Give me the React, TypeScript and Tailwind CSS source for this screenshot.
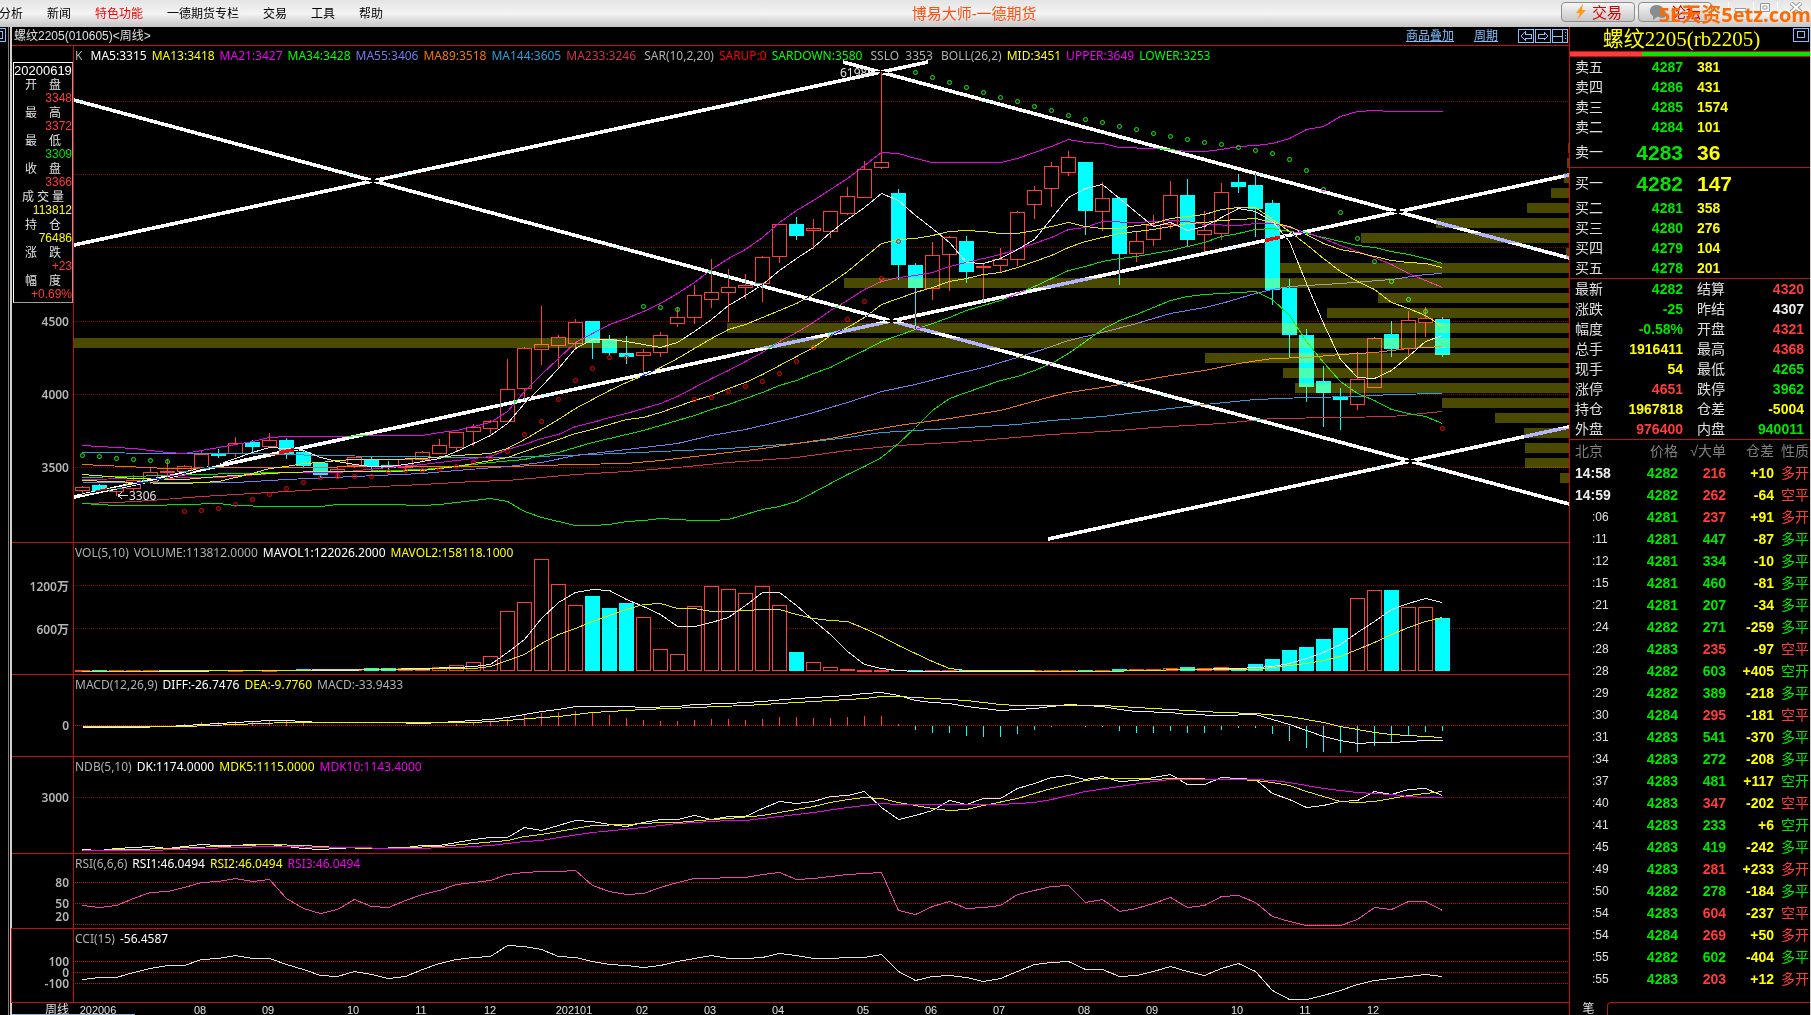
import React from "react";

type Kind = "r" | "c";
type Segment = [text: string, color: string];

const RED = "text-[#ff3c3c]";
const GREEN = "text-[#00e600]";
const YELLOW = "text-[#ffff00]";
const WHITE = "text-[#ececec]";
const GRAY = "text-[#b0b0b0]";
const MAGENTA = "text-[#f000f0]";

const barX = (i: number) => 82 + 17 * i;

// "index:y index:y ..." -> polyline points
const toPoints = (data: string) =>
  data
    .split(" ")
    .map((pair) => {
      const [i, y] = pair.split(":").map(Number);
      return `${barX(i) + 0.5},${y + 0.5}`;
    })
    .join(" ");

// kind, high, top, bottom, low
const CANDLES = `r486,487,490,494 c484,485,490,491 r487,488,491,495 r475,480,488,490 r467,472,481,483 r459,471,472,477
r465,466,471,475 r451,454,467,467 c449,453,455,457 r437,443,453,456 c440,442,446,453 r433,440,446,447
c438,440,453,458 c450,452,465,466 c462,463,474,477 r467,469,471,477 r457,457,465,467 c456,459,466,469
c461,465,467,470 r459,459,467,468 r451,452,459,460 r439,445,453,453 r432,432,447,450 r424,427,431,445
r420,421,428,433 r359,389,421,421 r347,348,388,399 r306,344,349,364 r335,337,345,368 r319,322,343,349
c321,321,342,358 c335,339,352,355 c336,353,356,363 r349,352,355,373 r332,335,352,356 r307,317,323,326
r285,295,317,323 r259,292,299,307 r269,287,292,321 r274,285,287,298 r256,257,283,301 r224,224,256,262
c217,224,235,239 r219,228,230,248 r211,211,231,237 r187,196,213,214 r161,169,197,197 r72,162,167,168
c189,193,264,279 c263,265,287,328 r242,255,288,299 r236,237,254,290 c236,241,271,282 r263,266,267,301
r248,259,265,272 r211,212,259,265 r186,190,204,218 r162,166,188,206 r151,157,172,175 c162,162,210,234
r182,198,211,230 c197,198,253,284 r231,241,253,261 r215,225,239,245 r181,195,224,228 c179,195,239,246
r211,230,234,251 r183,192,233,239 c174,182,186,192 c173,185,208,236 c200,203,289,304 c279,288,334,357
c329,335,386,401 c366,381,392,426 c388,397,399,429 r352,379,404,409 r337,338,387,387 c321,334,348,356
r311,320,348,354 r307,318,322,336 c317,319,354,356`
  .split(/\s+/)
  .map((s) => {
    const [high, top, bottom, low] = s.slice(1).split(",").map(Number);
    return { kind: s[0] as Kind, high, top, bottom, low };
  });

const MAIN_LINES: [color: string, data: string][] = [
  ["#d03050", "0:503 2:502 4:500 7:496 11:492 15:488 20:484 23:481 25:480 27:477 29:474 32:471 35:467 38:462 42:457 45:450 48:445 52:441 57:434 61:430 63:427 67:423 70:418 74:417 77:416 80:411"],
  ["#2a9fd8", "0:452 5:453 10:453 14:455 18:456 23:457 25:457 30:454 34:451 38:448 42:443 45:437 47:432 50:429 53:426 55:424 57:420 60:416 63:410 66:404 69:399 72:397 75:396 77:394 80:393"],
  ["#f07800", "0:464 5:468 10:467 20:466 25:466 29:464 32:463 34:460 36:456 38:452 40:448 42:443 44:438 46:431 48:425 51:418 54:410 57:396 58:392 60:387 62:381 64:375 66:370 68:363 70:358 72:357 74:354 76:352 78:348 80:346"],
  ["#7878f0", "0:482 9:482 12:479 16:476 20:473 22:470 25:466 27:462 29:455 31:451 33:447 35:443 37:435 39:429 41:421 43:412 45:402 47:391 49:384 51:375 53:367 55:357 57:346 58:340 60:332 62:323 64:313 66:307 67:303 68:298 69:293 70:289 71:286 74:283 77:279 79:274 80:273"],
  ["#00e600", "0:477 5:475 9:473 12:472 16:471 20:469 22:466 24:462 26:459 27:455 28:452 29:447 30:442 31:438 32:434 33:430 34:425 35:420 36:415 37:409 38:404 39:398 40:392 41:385 42:380 43:373 44:367 45:358 46:350 47:341 48:335 49:329 50:323 51:317 52:310 53:305 54:300 55:293 56:286 57:278 58:270 59:266 60:261 61:258 62:256 63:253 64:250 65:246 66:242 67:236 68:233 69:229 70:228 71:231 72:233 73:237 74:241 75:245 76:247 77:251 78:254 79:258 80:263"],
  ["#e000e0", "0:479 3:478 8:477 12:472 15:472 18:467 20:464 22:460 24:456 25:449 26:444 27:438 28:434 29:426 30:422 31:417 32:413 33:408 34:403 35:396 36:387 37:378 38:370 39:361 40:352 41:341 42:332 43:322 44:310 45:300 46:289 47:281 48:277 49:275 50:272 51:266 52:262 53:258 54:254 55:249 56:243 57:237 58:229 59:227 60:221 62:222 63:221 64:220 65:221 66:224 68:225 69:223 70:223 71:227 72:232 73:238 74:245 75:251 76:257 77:264 78:273 79:280 80:287"],
  ["#e6e600", "0:474 3:478 6:479 8:476 10:474 12:472 14:471 18:471 20:470 21:468 22:466 23:463 24:460 25:457 26:451 27:445 28:439 29:433 30:429 31:424 32:419 33:417 34:412 35:406 36:400 37:395 38:388 39:382 40:374 41:365 42:356 43:347 44:335 45:327 46:317 47:304 48:298 49:292 50:287 51:281 52:278 53:274 54:272 55:267 56:261 57:255 58:247 59:241 60:237 61:233 62:231 63:229 64:226 65:223 66:222 67:220 69:218 70:222 71:226 72:234 73:243 74:249 75:252 76:256 77:260 78:262 79:263 80:267"],
  ["#e6e600", "0:480 5:483 6:483 7:482 8:481 9:477 10:473 11:468 12:466 13:463 14:462 15:460 16:459 18:459 20:458 22:455 24:453 25:448 26:439 27:429 28:419 29:408 30:399 31:390 32:382 33:375 34:367 35:358 36:348 37:338 38:329 39:324 40:317 41:310 42:303 43:294 44:283 45:271 46:257 47:243 48:239 49:238 50:235 51:231 52:230 53:231 54:233 55:233 56:230 57:226 58:222 59:226 60:228 61:228 62:225 63:223 64:218 65:216 66:214 67:209 68:207 69:207 70:219 71:231 72:244 73:258 74:271 75:281 76:289 77:302 78:308 79:315 80:326"],
  ["#f000f0", "0:445 3:448 5:452 6:453 8:447 10:441 11:437 12:436 20:435 21:432 22:430 24:422 25:411 26:391 27:374 28:358 29:342 30:333 31:324 32:318 33:311 34:303 35:293 36:282 37:269 38:258 39:249 40:237 41:222 42:210 43:200 44:189 45:178 46:165 47:152 48:153 49:158 50:162 54:162 55:158 56:152 57:146 58:139 59:142 60:143 61:147 63:148 64:149 65:151 66:151 67:149 68:146 69:145 70:143 71:138 72:129 73:126 74:116 75:111 76:110 77:111 80:111"],
  ["#00e600", "0:503 2:505 4:505 6:504 8:503 9:505 11:506 14:506 15:504 18:504 20:505 21:504 22:502 23:500 24:498 25:501 26:511 27:517 28:521 29:525 30:525 31:524 32:521 33:520 34:518 36:520 37:520 38:519 39:514 40:509 41:506 42:501 43:492 44:483 45:474 46:466 47:457 48:443 49:427 50:410 51:398 52:392 53:386 54:380 55:376 56:370 57:363 58:353 59:341 60:329 61:320 62:314 63:307 64:300 65:296 66:294 67:293 69:291 70:299 71:315 72:341 73:362 74:381 75:393 76:400 77:409 78:413 79:416 80:423"],
  ["#e8e8e8", "0:494 4:481 6:473 7:468 8:464 9:458 10:452 11:447 12:448 13:450 14:457 15:461 16:464 17:466 18:466 19:464 20:461 21:458 22:451 23:443 24:435 25:423 26:403 27:386 28:368 29:348 30:339 31:339 32:341 33:344 34:347 35:342 36:331 37:319 38:305 39:295 40:284 41:270 42:258 43:247 44:232 45:219 46:207 47:193 48:200 49:215 50:228 51:242 52:262 53:263 54:258 55:249 56:239 57:218 58:197 59:188 60:184 61:198 62:212 63:226 64:222 65:230 66:226 67:217 68:208 69:211 70:221 71:241 72:283 73:323 74:359 75:377 76:378 77:370 78:356 79:341 80:335"],
];

const SAR_DOWN =
  "0:455 1:456 2:458 3:459 4:460 5:461 33:306 34:307 35:309 49:72 50:77 51:82 52:87 53:92 54:97 55:101 56:106 57:110 58:115 59:119 60:122 61:126 62:129 63:133 64:136 65:139 66:142 67:144 68:147 69:150 70:153 71:159 72:170 73:189 74:212 75:238 76:261 77:281 78:299 79:311";
const SAR_UP =
  "6:511 7:510 8:508 9:504 10:499 11:494 12:488 13:482 14:477 15:476 16:476 17:476 18:471 19:470 20:470 21:469 22:466 23:462 24:457 25:451 26:434 27:421 28:399 29:380 30:368 31:357 32:357 36:399 37:397 38:391 39:386 40:381 41:373 42:361 43:347 44:334 45:319 46:301 47:278 48:241 80:428";

const TREND_LINES = [
  [74, 100, 1569, 504],
  [74, 245, 928, 62],
  [843, 62, 1569, 258],
  [74, 497, 1569, 175],
  [1048, 539, 1569, 427],
];

// left edge of each price-volume row, 15px apart starting at y=143
const PROFILE = [1568, 1567, 1564, 1551, 1527, 1436, 1361, 1566, 1280, 844, 1378, 1327, 727, 74, 1205, 1283, 1295, 1442, 1495, 1524, 1525, 1525, 1560];

const VOLUME_TOPS: Record<number, number> = {
  13: 669, 14: 669, 15: 669, 16: 669, 17: 668, 18: 668, 19: 668, 20: 668, 21: 667, 22: 665, 23: 662, 24: 656,
  25: 611, 26: 602, 27: 559, 28: 584, 29: 605, 30: 596, 31: 608, 32: 603, 33: 617, 34: 649, 35: 654, 36: 606,
  37: 586, 38: 589, 39: 593, 40: 586, 41: 605, 42: 652, 43: 662, 44: 667, 45: 669, 61: 669, 62: 669, 63: 669,
  64: 668, 65: 667, 66: 668, 67: 667, 68: 669, 69: 664, 70: 659, 71: 650, 72: 647, 73: 639, 74: 628, 75: 598,
  76: 590, 77: 590, 78: 607, 79: 607, 80: 618,
};

const MACD_BARS =
  "6:724 7:722 8:722 9:721 10:721 11:720 12:721 13:722 22:724 23:722 24:721 25:719 26:715 27:713 28:712 29:711 30:713 31:715 32:718 33:720 34:721 35:721 36:720 37:719 38:719 39:720 40:719 41:717 42:717 43:718 44:718 45:717 46:716 47:716 48:724 49:730 50:733 51:733 52:736 53:737 54:737 55:734 56:730 57:727 59:727 60:727 61:731 62:733 63:733 64:731 65:733 66:733 67:730 68:728 69:728 70:734 71:741 72:748 73:752 74:753 75:752 76:746 77:742 78:735 79:732 80:731";

const RSI_LINE =
  "0:905 1:907 2:905 3:898 4:892 5:891 6:887 7:882 8:881 9:878 10:881 11:879 12:898 13:908 14:913 15:909 16:899 17:906 18:907 19:900 20:894 21:890 22:884 23:882 24:880 25:874 26:872 27:871 28:871 29:870 30:885 31:891 32:894 33:893 34:887 35:882 36:878 37:878 38:877 39:877 40:874 41:872 42:879 43:878 44:876 45:874 46:873 47:872 48:910 49:914 50:906 51:901 52:908 53:907 54:905 55:894 56:890 57:886 58:885 59:902 60:899 61:911 62:908 63:903 64:897 65:907 66:905 67:896 68:895 69:902 70:916 71:921 72:925 74:925 75:919 76:907 77:909 78:901 79:901 80:910";

const SUB_LINES = {
  vol: [
    ["#e8e8e8", "0:671 15:670 20:668 22:667 23:666 24:664 25:652 26:639 27:618 28:602 29:592 30:589 31:590 32:599 33:606 34:614 35:626 36:626 37:622 38:617 39:605 40:592 41:592 42:605 43:620 44:634 45:651 46:664 47:668 48:670 49:671 60:671 65:669 68:668 70:666 71:663 72:658 73:652 74:644 75:632 76:621 77:609 78:603 79:598 80:602"],
    ["#e6e600", "0:671 18:669 23:668 24:666 25:660 26:654 27:643 28:634 29:628 30:621 31:615 32:609 33:604 34:603 35:608 36:608 37:611 38:611 39:610 40:609 41:609 42:614 43:618 44:620 45:621 46:628 47:636 48:645 49:653 50:661 51:668 52:670 60:671 65:669 69:669 70:667 71:665 72:663 73:660 74:656 75:649 76:642 77:634 78:627 79:621 80:617"],
  ],
  macd: [
    ["#ececec", "0:727 3:727 5:726 7:724 9:722 11:720 12:720 14:722 18:722 20:723 22:721 24:719 25:717 26:714 27:711 28:709 29:706 32:706 33:707 35:706 36:704 38:703 40:701 42:698 44:696 45:695 46:693 47:692 48:695 49:700 50:702 51:703 52:706 53:708 54:710 55:709 56:708 57:706 58:704 60:706 61:709 62:711 64:712 65:714 67:715 69:714 70:719 71:724 72:730 73:736 74:740 75:743 76:742 77:742 78:741 79:740 80:740"],
    ["#f0f000", "0:726 6:726 9:724 12:722 23:722 25:720 27:717 28:716 29:714 30:712 33:709 36:707 39:705 42:702 44:700 46:698 47:696 48:696 50:698 52:700 54:704 55:705 60:705 62:707 64:709 66:711 67:712 69:713 71:716 72:719 73:722 74:726 75:729 76:732 77:734 79:736 80:737"],
  ],
  ndb: [
    ["#e8e8e8", "0:849 1:850 2:848 4:846 5:848 7:844 8:845 11:844 12:846 13:848 14:849 16:847 18:848 19:847 20:845 21:845 22:842 23:839 24:837 25:837 26:827 27:830 28:825 29:820 30:821 31:824 32:826 33:822 34:819 35:819 36:815 37:819 38:816 39:816 40:808 41:801 42:803 43:801 44:796 45:795 46:791 47:807 48:819 49:815 50:810 51:800 52:804 53:798 54:798 55:788 56:783 57:777 58:775 59:779 60:776 61:781 62:780 63:777 64:774 65:784 66:784 67:777 68:778 69:779 70:793 71:799 72:807 73:805 74:801 75:800 76:791 77:794 78:789 79:788 80:795"],
    ["#e6e600", "0:850 3:849 5:848 8:846 11:844 13:845 15:847 17:848 19:847 21:846 23:843 25:840 26:836 27:834 28:831 29:828 30:825 32:824 34:822 35:822 37:819 38:818 40:815 41:812 43:806 44:802 45:799 46:797 47:798 48:802 50:808 51:810 52:809 53:805 55:798 57:788 58:784 59:780 60:778 62:778 63:779 64:778 68:779 69:780 70:782 71:785 72:791 73:796 74:801 75:802 76:801 77:798 78:795 79:793 80:791"],
    ["#f000f0", "0:850 4:850 7:848 9:847 11:846 15:847 19:848 22:847 24:845 25:843 26:841 27:840 28:837 30:832 33:827 35:823 38:820 39:820 41:816 43:812 45:807 47:803 48:804 54:804 56:802 57:799 59:791 61:786 63:781 64:779 69:779 70:780 71:782 73:788 75:792 77:794 78:796 79:797 80:797"],
  ],
  rsi: [
    ["#f040b0", RSI_LINE],
  ],
  cci: [
    ["#e0e0e0", "0:979 1:977 2:977 3:972 4:968 5:965 6:965 7:959 8:958 9:955 10:958 11:958 12:964 13:969 14:975 15:976 16:971 17:974 18:978 19:976 20:969 21:963 22:959 23:957 24:956 25:945 26:946 27:949 28:956 29:957 30:961 31:964 32:965 33:967 34:965 35:961 36:958 37:955 38:958 39:958 40:957 41:953 42:955 43:958 44:958 45:957 46:957 47:954 48:971 49:980 50:976 51:975 52:977 53:981 54:978 55:971 56:964 57:962 58:961 59:969 60:969 61:976 62:975 63:971 64:966 65:971 66:975 67:968 68:963 69:971 70:990 71:999 72:999 73:995 74:990 75:984 76:980 77:978 78:976 79:974 80:976"],
  ],
} as Record<string, [string, string][]>;

const MONTHS: [x: number, label: string][] = [
  [98, "202006"], [200, "08"], [268, "09"], [353, "10"], [421, "11"], [490, "12"], [574, "202101"], [642, "02"], [710, "03"],
  [778, "04"], [863, "05"], [931, "06"], [999, "07"], [1084, "08"], [1152, "09"], [1237, "10"], [1305, "11"], [1373, "12"],
];

const INFO: [label: string, value: string, color: string][] = [
  ["开盘", "3348", RED],
  ["最高", "3372", RED],
  ["最低", "3309", GREEN],
  ["收盘", "3366", RED],
  ["成交量", "113812", YELLOW],
  ["持仓", "76486", YELLOW],
  ["涨跌", "+23", RED],
  ["幅度", "+0.69%", RED],
];

const ASKS = [["卖五", "4287", "381"], ["卖四", "4286", "431"], ["卖三", "4285", "1574"], ["卖二", "4284", "101"], ["卖一", "4283", "36"]];
const BIDS = [["买一", "4282", "147"], ["买二", "4281", "358"], ["买三", "4280", "276"], ["买四", "4279", "104"], ["买五", "4278", "201"]];

const STATS: [string, string, string, string, string, string][] = [
  ["最新", "4282", GREEN, "结算", "4320", RED],
  ["涨跌", "-25", GREEN, "昨结", "4307", WHITE],
  ["幅度", "-0.58%", GREEN, "开盘", "4321", RED],
  ["总手", "1916411", YELLOW, "最高", "4368", RED],
  ["现手", "54", YELLOW, "最低", "4265", GREEN],
  ["涨停", "4651", RED, "跌停", "3962", GREEN],
  ["持仓", "1967818", YELLOW, "仓差", "-5004", YELLOW],
  ["外盘", "976400", RED, "内盘", "940011", GREEN],
];

// time, price, volume, open interest change, nature, kind (r = buy side, g = sell side)
const TICKS = `14:58 4282 216 +10 多开 r
14:59 4282 262 -64 空平 r
:06 4281 237 +91 多开 r
:11 4281 447 -87 多平 g
:12 4281 334 -10 多平 g
:15 4281 460 -81 多平 g
:21 4281 207 -34 多平 g
:24 4282 271 -259 多平 g
:28 4283 235 -97 空平 r
:28 4282 603 +405 空开 g
:29 4282 389 -218 多平 g
:30 4284 295 -181 空平 r
:31 4283 541 -370 多平 g
:34 4283 272 -208 多平 g
:37 4283 481 +117 空开 g
:40 4283 347 -202 空平 r
:41 4283 233 +6 空开 g
:45 4283 419 -242 多平 g
:49 4283 281 +233 多开 r
:50 4282 278 -184 多平 g
:54 4283 604 -237 空平 r
:54 4284 269 +50 多开 r
:55 4282 602 -404 多平 g
:55 4283 203 +12 多开 r`
  .split("\n")
  .map((row) => row.split(" "));

const Lines: React.FC<{ items: [string, string][] }> = ({ items }) => (
  <>
    {items.map(([color, data], n) => (
      <polyline key={n} points={toPoints(data)} fill="none" stroke={color} />
    ))}
  </>
);

const Grid: React.FC<{ rows: number[]; color?: string }> = ({ rows, color = "#8c0000" }) => (
  <>
    {rows.map((y) => (
      <line key={y} x1={75} x2={1569} y1={y + 0.5} y2={y + 0.5} stroke={color} strokeDasharray="1 1" />
    ))}
  </>
);

const Bar: React.FC<{ index: number; kind: Kind; top: number; bottom: number }> = ({ index, kind, top, bottom }) => {
  const x = barX(index) - 7;
  if (kind === "c") {
    return <rect x={x} y={top} width={15} height={Math.max(1, bottom - top + 1)} fill="#00ffff" />;
  }
  return <rect x={x + 0.5} y={top + 0.5} width={14} height={Math.max(0.5, bottom - top)} fill="#000" stroke="#ff3c3c" />;
};

interface PanelProps {
  sizing: string;
  top: number;
  height: number;
  legend: Segment[];
  ticks: [y: number, label: string][];
  axisFrame?: string;
  info?: React.ReactNode;
  children: React.ReactNode;
}

const Panel: React.FC<PanelProps> = ({ sizing, top, height, legend, ticks, axisFrame = "", info, children }) => (
  <section className={`flex border-b border-[#c01010] ${sizing}`}>
    <div className={`relative w-[61px] shrink-0 ${axisFrame}`}>
      <svg
        viewBox={`12 ${top} 61 ${height}`}
        preserveAspectRatio="none"
        className="absolute inset-0 h-full w-full overflow-visible"
      >
        {ticks.map(([y, label]) => (
          <text key={label} x={69} y={y + 5} textAnchor="end" className="fill-[#b4b4b4] text-[12px] font-semibold">
            {label}
          </text>
        ))}
      </svg>
      {info}
    </div>
    <div className="relative min-w-0 flex-1 border-l border-[#c01010]">
      <svg
        viewBox={`74 ${top} 1495 ${height}`}
        preserveAspectRatio="none"
        shapeRendering="crispEdges"
        className="absolute inset-0 h-full w-full bg-black"
      >
        {children}
      </svg>
      <p className="relative flex h-5 items-center gap-[5px] overflow-hidden whitespace-pre pl-px text-[12px]">
        {legend.map(([text, color]) => (
          <span key={text} className={color}>
            {text}
          </span>
        ))}
      </p>
    </div>
  </section>
);

const TopBar = () => (
  <header className="relative flex h-[27px] shrink-0 items-center overflow-hidden bg-linear-to-b from-[#e4e4e4] via-[#f4f4f4] to-[#c4c4c4] text-[12px] text-black">
    <nav className="-ml-px flex gap-6">
      <button>分析</button>
      <button>新闻</button>
      <button className="text-[#ff0000]">特色功能</button>
      <button>一德期货专栏</button>
      <button>交易</button>
      <button>工具</button>
      <button>帮助</button>
    </nav>
    <h1 className="flex-1 pl-1 text-center text-[15px] text-[#ff5010]">博易大师-一德期货</h1>
    <div className="flex h-full items-start gap-[3px] pt-[2px]">
      <button className="flex h-5 w-[74px] items-center justify-center gap-1 rounded border border-[#8c8c8c] bg-linear-to-b from-[#f6f6f6] to-[#c8c8c8] text-[15px] text-[#d80000]">
        <svg viewBox="0 0 14 16" className="h-4 w-[14px]">
          <path d="M9 0 2 9h4l-3 7 9-10H8z" fill="#ff9a1a" />
        </svg>
        交易
      </button>
      <button className="flex h-5 w-[74px] items-center justify-center gap-1 rounded border border-[#8c8c8c] bg-linear-to-b from-[#f6f6f6] to-[#c8c8c8] text-[15px] text-[#d80000]">
        <svg viewBox="0 0 18 16" className="h-4 w-[18px]">
          <path d="M8 1a7 6 0 0 1 0 12l-4 3v-4A7 6 0 0 1 8 1z" fill="#8c8c8c" />
          <circle cx="13" cy="10" r="4" fill="#8c8c8c" />
        </svg>
        论坛
      </button>
      <svg viewBox="0 0 96 20" className="h-5 w-24" fill="none" aria-hidden="true">
        <path d="M13.500 0v18M38.500 0v18M62.500 0v18" stroke="#fff" />
        <path d="M20 6.500h11v3H20z" fill="#fff" stroke="#999" />
        <path d="M45.500 1.500h9v8h-9zM48 4h4v3h-4z" fill="#fff" stroke="#999" />
        <path d="m76 1 10 9m0-9-10 9" stroke="#999" strokeWidth="4" />
        <path d="m76 1 10 9m0-9-10 9" stroke="#fff" strokeWidth="2" />
      </svg>
    </div>
    <span className="absolute right-0 top-[2px] font-['Open_Sans','Noto_Sans_CJK_SC',sans-serif] text-[20px] font-bold leading-[25px] text-[#ff6a00]">
      5E天资5etz.com
    </span>
  </header>
);

const WindowIcon: React.FC<{ d: string }> = ({ d }) => (
  <svg viewBox="0 0 16 14" className="h-[14px] w-4" fill="none" stroke="#80c0ff" shapeRendering="crispEdges">
    <path d="M.5.5h15v13H.5z" />
    <path d={d} />
  </svg>
);

const InfoBox = () => (
  <div className="absolute left-px top-4 z-10 w-[60px] border border-b-[#a0a0a0] border-l-white border-r-[#a0a0a0] border-t-white bg-black pb-px font-['Liberation_Sans','Noto_Sans_CJK_SC',sans-serif] text-[12px] leading-[14px]">
    <div className="h-[14px] text-[13px] leading-[16px] text-white">20200619</div>
    {INFO.map(([label, value, color]) => (
      <div key={label}>
        <div className={`mx-auto flex h-[14px] justify-between leading-[16px] text-[#e0e0e0] ${label.length > 2 ? "w-[42px]" : "w-9"}`}>
          {label.split("").map((ch) => (
            <span key={ch}>{ch}</span>
          ))}
        </div>
        <div className={`text-right ${color}`}>{value}</div>
      </div>
    ))}
  </div>
);

const Charts = () => (
  <main className="flex min-w-0 flex-1 flex-col">
    <div className="flex h-[19px] shrink-0 items-center border-b border-[#c01010] pl-[2px] pr-px font-['Liberation_Sans','Noto_Sans_CJK_SC',sans-serif] text-[12px]">
      <h2 className="flex-1 text-[#e0e0e0]">螺纹2205(010605)&lt;周线&gt;</h2>
      <a href="#overlay" className="mr-5 text-[#80c0ff] underline">
        商品叠加
      </a>
      <a href="#period" className="mr-5 text-[#80c0ff] underline">
        周期
      </a>
      <div className="flex gap-px">
        <button aria-label="上一个"><WindowIcon d="M3 7l4-4v2h6v4H7v2z" /></button>
        <button aria-label="下一个"><WindowIcon d="M13 7 9 3v2H3v4h6v2z" /></button>
        <button aria-label="布局"><WindowIcon d="M0 7.500h10M10.500 0v14M13.500 3v1M13.500 6v1M13.500 9v1" /></button>
      </div>
    </div>

    <Panel
      sizing="min-h-[200px] flex-1"
      top={46}
      height={496}
      info={<InfoBox />}
      ticks={[[321, "4500"], [394, "4000"], [467, "3500"]]}
      legend={[
        ["K ", GRAY],
        ["MA5:3315", "text-white"],
        ["MA13:3418", YELLOW],
        ["MA21:3427", MAGENTA],
        ["MA34:3428", "text-[#00ff00]"],
        ["MA55:3406", "text-[#7878f0]"],
        ["MA89:3518", "text-[#f07800]"],
        ["MA144:3605", "text-[#2a9fd8]"],
        ["MA233:3246 ", "text-[#d03050]"],
        ["SAR(10,2,20)", GRAY],
        ["SARUP:0", "text-[#ff0000]"],
        ["SARDOWN:3580 ", "text-[#00ff00]"],
        ["SSLO  3353 ", GRAY],
        ["BOLL(26,2)", GRAY],
        ["MID:3451", YELLOW],
        ["UPPER:3649", MAGENTA],
        ["LOWER:3253", "text-[#00ff00]"],
      ]}
    >
      <Grid rows={[101, 174, 247, 321, 394, 467]} />
      {CANDLES.map((c, i) => (
        <g key={i}>
          <line
            x1={barX(i) + 0.5}
            x2={barX(i) + 0.5}
            y1={c.high}
            y2={c.low + 1}
            stroke={c.kind === "c" ? "#00ffff" : "#ff3c3c"}
          />
          <Bar index={i} kind={c.kind} top={c.top} bottom={c.bottom} />
        </g>
      ))}
      <Lines items={MAIN_LINES} />
      {[SAR_DOWN, SAR_UP].map((data, n) =>
        data.split(" ").map((pair) => {
          const [i, y] = pair.split(":").map(Number);
          return (
            <circle
              key={pair}
              cx={barX(i) + 0.5}
              cy={y + 0.5}
              r={2}
              fill="none"
              stroke={n ? "#ff0000" : "#00ff00"}
              shapeRendering="geometricPrecision"
            />
          );
        })
      )}
      {PROFILE.map((x, n) => (
        <rect key={n} x={x} y={143 + n * 15} width={1569 - x} height={10} fill="#ffff00" opacity={0.29} />
      ))}
      {TREND_LINES.map(([x1, y1, x2, y2], n) => (
        <line key={n} x1={x1} y1={y1} x2={x2} y2={y2} stroke="#fff" strokeWidth={3.6} className="mix-blend-difference" />
      ))}
      <text x={840} y={77} className="fill-[#e0e0e0] text-[12px]">6198</text>
      <path d="M868 72.500h12M868 72.500l4-3M868 72.500l4 3" stroke="#e0e0e0" fill="none" />
      <path d="M118 495.500h10M118 495.500l4-3M118 495.500l4 3" stroke="#e0e0e0" fill="none" />
      <text x={129} y={500} className="fill-[#e0e0e0] text-[12px]">3306</text>
    </Panel>

    <Panel
      sizing="h-[132px] shrink-0"
      top={543}
      height={131}
      ticks={[[586, "1200万"], [629, "600万"]]}
      legend={[
        ["VOL(5,10)", GRAY],
        ["VOLUME:113812.0000", GRAY],
        ["MAVOL1:122026.2000", "text-white"],
        ["MAVOL2:158118.1000", YELLOW],
      ]}
    >
      <Grid rows={[585, 628]} />
      {CANDLES.map((c, i) => (
        <Bar key={i} index={i} kind={c.kind} top={VOLUME_TOPS[i] ?? 670} bottom={670} />
      ))}
      <Lines items={SUB_LINES.vol} />
    </Panel>

    <Panel
      sizing="h-[82px] shrink-0"
      top={675}
      height={81}
      ticks={[[725, "0"]]}
      legend={[
        ["MACD(12,26,9)", GRAY],
        ["DIFF:-26.7476", "text-white"],
        ["DEA:-9.7760", YELLOW],
        ["MACD:-33.9433", GRAY],
      ]}
    >
      <Grid rows={[725]} color="#d01010" />
      {MACD_BARS.split(" ").map((pair) => {
        const [i, y] = pair.split(":").map(Number);
        return (
          <line key={i} x1={barX(i) + 0.5} x2={barX(i) + 0.5} y1={725.5} y2={y} stroke={y > 725 ? "#00ffff" : "#ff3c3c"} />
        );
      })}
      <Lines items={SUB_LINES.macd} />
    </Panel>

    <Panel
      sizing="h-[97px] shrink-0"
      top={757}
      height={96}
      ticks={[[797, "3000"]]}
      legend={[
        ["NDB(5,10)", GRAY],
        ["DK:1174.0000", "text-white"],
        ["MDK5:1115.0000", YELLOW],
        ["MDK10:1143.4000", MAGENTA],
      ]}
    >
      <Grid rows={[797]} />
      <Lines items={SUB_LINES.ndb} />
    </Panel>

    <Panel
      sizing="h-[75px] shrink-0"
      top={854}
      height={74}
      ticks={[[882, "80"], [903, "50"], [916, "20"]]}
      legend={[
        ["RSI(6,6,6)", GRAY],
        ["RSI1:46.0494", "text-white"],
        ["RSI2:46.0494", YELLOW],
        ["RSI3:46.0494", MAGENTA],
      ]}
    >
      <Grid rows={[882, 903, 924]} color="#d01010" />
      <Lines items={SUB_LINES.rsi} />
    </Panel>

    <Panel
      sizing="h-[74px] shrink-0"
      top={929}
      height={73}
      axisFrame="ring-1 ring-[#c01010]"
      ticks={[[961, "100"], [972, "0"], [983, "-100"]]}
      legend={[
        ["CCI(15)", GRAY],
        ["-56.4587", "text-white"],
      ]}
    >
      <Grid rows={[961, 972, 983]} color="#d01010" />
      <Lines items={SUB_LINES.cci} />
    </Panel>

    <div className="h-3 shrink-0 overflow-hidden">
      <svg
        viewBox="12 1003 1557 12"
        preserveAspectRatio="none"
        className="block h-3 w-full fill-[#e0e0e0] font-['Liberation_Sans','Noto_Sans_CJK_SC',sans-serif] text-[12px]"
      >
        <text x={69} y={1014} textAnchor="end">周线</text>
        {MONTHS.map(([x, label]) => (
          <text key={x} x={x} y={1014} textAnchor="middle" className="text-[11px]">
            {label}
          </text>
        ))}
        <rect x={12} y={1014} width={123} height={1} fill="#90b0d8" />
      </svg>
    </div>
  </main>
);

const Depth: React.FC<{ rows: string[][]; big: string }> = ({ rows, big }) => (
  <div className="border-b border-[#c01010]">
    <table className="w-full table-fixed font-bold leading-none">
      <colgroup>
        <col className="w-[44px]" />
        <col className="w-[69px]" />
        <col />
      </colgroup>
      <tbody>
        {rows.map(([label, price, volume]) => (
          <tr key={label} className={label === big ? "h-[30px] text-[21px]" : "h-5"}>
            <th scope="row" className="p-0 pl-[5px] text-left text-[14px] font-normal text-[#e0e0e0]">{label}</th>
            <td className={`p-0 text-right ${GREEN}`}>{price}</td>
            <td className={`p-0 pl-[14px] ${YELLOW}`}>{volume}</td>
          </tr>
        ))}
      </tbody>
    </table>
  </div>
);

const QuotePanel = () => (
  <aside className="flex w-[242px] shrink-0 flex-col border-l border-r border-l-[#c01010] border-r-[#d4d0c8] font-['Liberation_Sans','Noto_Sans_CJK_SC',sans-serif] text-[14px] leading-none">
    <div className="flex h-6 items-start">
      <h2 className="flex-1 text-center font-['Liberation_Serif','Noto_Sans_CJK_SC',serif] text-[21px] leading-[24px] text-[#ffff00]">
        螺纹2205(rb2205)
      </h2>
      <button aria-label="最大化" className="pr-px pt-px"><WindowIcon d="M4.500 3.500h7v6h-7z" /></button>
    </div>
    <div className="flex h-[6px] border-y border-[#c01010]">
      <div className="w-[30%] bg-[#ff3c3c]" />
      <div className="flex-1 bg-[#00e600]" />
    </div>
    <Depth rows={ASKS} big="卖一" />
    <Depth rows={BIDS} big="买一" />
    <div className="border-b border-[#c01010]">
      <table className="w-full table-fixed leading-none">
        <colgroup>
          <col className="w-[44px]" />
          <col className="w-[69px]" />
          <col className="w-[47px]" />
          <col />
        </colgroup>
        <tbody>
          {STATS.map(([l1, v1, c1, l2, v2, c2]) => (
            <tr key={l1} className="h-5">
              <th scope="row" className="p-0 pl-[5px] text-left font-normal text-[#e0e0e0]">{l1}</th>
              <td className={`p-0 text-right font-bold ${c1}`}>{v1}</td>
              <th scope="row" className="p-0 pl-[14px] text-left font-normal text-[#e0e0e0]">{l2}</th>
              <td className={`p-0 pr-[6px] text-right font-bold ${c2}`}>{v2}</td>
            </tr>
          ))}
        </tbody>
      </table>
    </div>
    <table className="w-full table-fixed leading-none">
      <colgroup>
        <col className="w-[60px]" />
        <col className="w-[48px]" />
        <col className="w-[48px]" />
        <col className="w-[48px]" />
        <col />
      </colgroup>
      <thead>
        <tr className="h-[22px] whitespace-nowrap text-right text-[#808080]">
          <th className="p-0 pl-[5px] text-left font-normal">北京</th>
          <th className="p-0 font-normal">价格</th>
          <th className="p-0 font-normal">√大单</th>
          <th className="p-0 font-normal">仓差</th>
          <th className="p-0 pr-px font-normal">性质</th>
        </tr>
      </thead>
      <tbody>
        {TICKS.map(([time, price, volume, change, nature, kind], n) => (
          <tr key={n} className="h-[22px] text-right font-bold">
            <td className={time.startsWith(":") ? "p-0 pl-[22px] text-left text-[12px] font-normal text-[#e0e0e0]" : "p-0 pl-[5px] text-left text-[#ececec]"}>
              {time}
            </td>
            <td className={`p-0 ${GREEN}`}>{price}</td>
            <td className={`p-0 ${kind === "r" ? RED : GREEN}`}>{volume}</td>
            <td className={`p-0 ${YELLOW}`}>{change}</td>
            <td className={`p-0 pr-px font-normal ${kind === "r" ? RED : GREEN}`}>{nature}</td>
          </tr>
        ))}
      </tbody>
    </table>
    <div className="mt-auto flex h-[13px] overflow-hidden">
      <button className="w-[37px] text-[12px] leading-[14px] text-[#e0e0e0]">笔</button>
      <div className="flex-1 rounded-tl border-l border-t border-[#c01010]" />
    </div>
  </aside>
);

export default function App() {
  return (
    <div className="flex h-screen flex-col overflow-hidden bg-black font-['Noto_Sans','Noto_Sans_CJK_SC',sans-serif]">
      <TopBar />
      <div className="flex min-h-0 flex-1">
        <div className="w-2 shrink-0 overflow-hidden pt-px">
          <div className="h-[14px] w-[6px] border-y border-r border-[#80c0ff] py-[2px] pr-[2px]">
            <div className="h-full border-y border-r border-[#80c0ff]" />
          </div>
        </div>
        <div className="w-1 shrink-0 border-l border-r-2 border-l-[#808080] border-r-[#d4d0c8]" />
        <Charts />
        <QuotePanel />
      </div>
    </div>
  );
}
